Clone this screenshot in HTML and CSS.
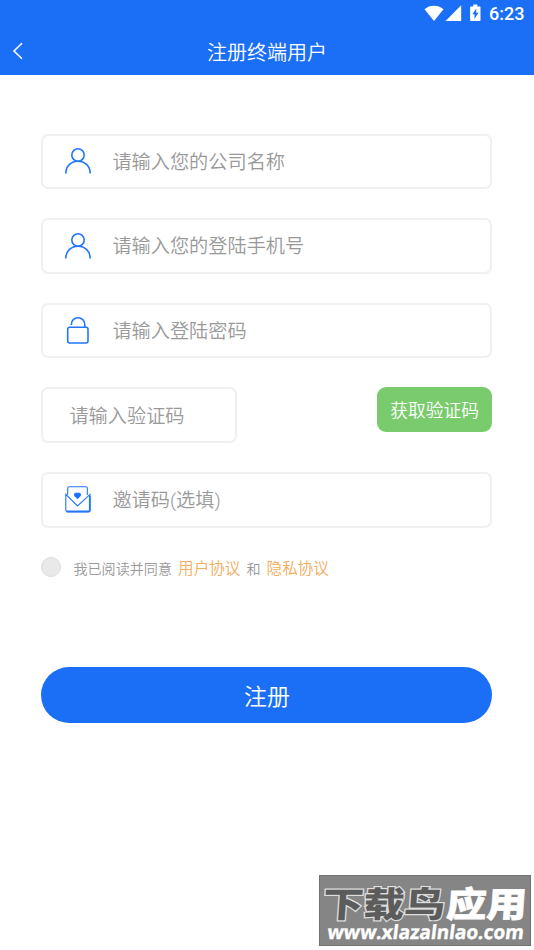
FILE: index.html
```
<!doctype html>
<html lang="zh-CN">
<head>
	<meta charset="UTF-8">
	<title>注册终端用户</title>
	<meta name="viewport" content="width=device-width, initial-scale=1.0">
	<link rel="stylesheet" href="styles.css">
</head>
<body>
	<div class="header">
		<div class="status">
			<svg class="signal" width="74" height="20" viewBox="0 0 74 20">
				<path d="M.5 7.2C6 2.7 14 2.7 19.5 7.2L10 19z"/>
				<path d="M37.2 3.2V19H21.5z"/>
				<path fill-rule="evenodd" d="M46.8 4.5h2.5V2.5h4v2h2.5q.7 0 .7.7v13q0 .8-.8.8h-8.8q-.8 0-.8-.8v-13q0-.7.7-.7zM52.3 6.5l-4 5.7h2.2v4.6l4-6h-2.3z"/>
			</svg>
			<span>6:23</span>
		</div>
		<div class="nav">
			<a class="back" href="javascript:;">
				<svg width="12" height="18" viewBox="0 0 12 18"><path d="M10 1.2L2 9l8 7.8"/></svg>
			</a>
			<h1>注册终端用户</h1>
		</div>
	</div>

	<form class="form">
		<label class="field">
			<svg class="icon" viewBox="0 0 28 30"><circle cx="14" cy="8" r="6.2"/><path d="M1.8 26.6C1.8 18.5 7.5 14.2 14 14.2S26.2 18.5 26.2 26.6"/></svg>
			<input type="text" placeholder="请输入您的公司名称">
		</label>
		<label class="field">
			<svg class="icon" viewBox="0 0 28 30"><circle cx="14" cy="8" r="6.2"/><path d="M1.8 26.6C1.8 18.5 7.5 14.2 14 14.2S26.2 18.5 26.2 26.6"/></svg>
			<input type="text" placeholder="请输入您的登陆手机号">
		</label>
		<label class="field">
			<svg class="icon lock" viewBox="0 0 28 30"><rect x="3.7" y="11.3" width="20.3" height="15.7" rx="2"/><path d="M7.4 9V8.2C7.4 4.4 10.2 1.8 14 1.8s6.8 2.8 6.8 6.6v2.9"/></svg>
			<input type="password" placeholder="请输入登陆密码">
		</label>
		<div class="row">
			<label class="field code">
				<input type="text" placeholder="请输入验证码">
			</label>
			<button type="button" class="get-code">获取验证码</button>
		</div>
		<label class="field">
			<svg class="icon mail" viewBox="0 0 28 30">
				<path d="M3.7 10V3.2q0-1.4 1.4-1.4h16.8q1.4 0 1.4 1.4V10"/>
				<path d="M1.8 9.4V25q0 1.6 1.6 1.6h21q1.6 0 1.6-1.6V9.4L13.5 21z"/>
				<path class="edge" d="M2.5 26.5h22.3q1 0 1-1V11"/>
				<path class="heart" d="M13.5 13.4L10.9 10.8C9.6 9 12 7 13.5 8.7C15 7 17.4 9 16.1 10.8z"/>
			</svg>
			<input type="text" placeholder="邀请码(选填)">
		</label>
		<div class="agree">
			<i class="check"></i>
			<span>我已阅读并同意</span>
			<a href="javascript:;">用户协议</a>
			<span>和</span>
			<a href="javascript:;">隐私协议</a>
		</div>
		<button type="button" class="submit">注册</button>
	</form>

	<svg class="watermark" width="212" height="71" viewBox="0 0 212 71">
		<text class="wm-name wm-dark" transform="translate(0 42) skewX(-4)" textLength="126" lengthAdjust="spacingAndGlyphs">下载鸟</text>
		<text class="wm-name" transform="translate(127 42) skewX(-4)" textLength="83" lengthAdjust="spacingAndGlyphs">应用</text>
		<text class="wm-url" transform="translate(5 65) skewX(-7)" textLength="202" lengthAdjust="spacingAndGlyphs">www.xlazalnlao.com</text>
	</svg>
</body>
</html>
```
FILE: styles.css
```
body,h1{
	margin:0;
	padding:0;
}
*{
	box-sizing:border-box;
}
body{
	background:#fff;
	font-family:Roboto,"Noto Sans CJK SC",sans-serif;
}
a{
	text-decoration:none;
}
input,button{
	margin:0;
	padding:0;
	border:0;
	outline:none;
	background:none;
	font-family:inherit;
	font-weight:350;
}
.header{
	height:75px;
	background:#1b6ff6;
	color:#fff;
}
.status{
	display:flex;
	justify-content:flex-end;
	height:28px;
	padding-right:9px;
	font-size:18px;
	font-weight:500;
	line-height:28px;
}
.signal{
	margin:2px -9px 0 0;
	fill:#fff;
}
.status span{
	width:36px;
	white-space:nowrap;
}
.nav{
	display:grid;
	grid-template-columns:60px 1fr 60px;
	align-items:center;
	height:47px;
}
.back{
	display:flex;
	padding-left:12px;
}
.back svg{
	margin-top:-1px;
	fill:none;
	stroke:#fff;
	stroke-width:1.6;
}
.nav h1{
	padding-top:3px;
	font-size:20px;
	font-weight:350;
	line-height:44px;
	text-align:center;
}
.form{
	padding:58.6px 41.6px 0 41.4px;
}
.field{
	display:flex;
	align-items:center;
	height:55.6px;
	margin-bottom:29px;
	padding-left:20.4px;
	border:2px solid #f0f0f0;
	border-radius:7px;
}
.icon{
	flex:none;
	width:28px;
	height:30px;
	margin:2px 20.6px 0 0;
	fill:none;
	stroke:#2276fb;
	stroke-width:1.6;
}
.lock{
	margin-top:0;
}
.mail{
	margin-top:1px;
	stroke-width:1.1;
}
.mail .edge{
	stroke-width:1.8;
}
.mail .heart{
	fill:#1b6ff6;
}
.field input{
	flex:1;
	min-width:0;
	height:50px;
	padding-top:2px;
	font-size:19.2px;
}
.field input::placeholder{
	color:#999;
}
.row{
	display:flex;
	justify-content:space-between;
	align-items:flex-start;
}
.code{
	width:195.5px;
	padding-left:26px;
}
.get-code{
	width:115.5px;
	height:44.5px;
	padding-bottom:1px;
	border-radius:9px;
	background:#7acb6d;
	color:#fff;
	font-size:17.8px;
}
.agree{
	display:flex;
	align-items:center;
	height:24px;
	color:#999;
	font-size:14.1px;
	font-weight:350;
	line-height:24px;
}
.agree a{
	margin:0 6px;
	color:#f2ad60;
	font-size:15.6px;
}
.check{
	width:20px;
	height:20px;
	margin:-4px 12px 0 0;
	border:1px solid #ddd;
	border-radius:50%;
	background:#e9e9e9;
}
.submit{
	display:block;
	width:100%;
	height:56px;
	margin-top:86px;
	border-radius:28px;
	background:#1b6ff6;
	color:#fff;
	font-size:23px;
}
.watermark{
	position:fixed;
	right:3px;
	bottom:4px;
	border:1px solid #707070;
	background:#858585;
}
.wm-name{
	fill:#fff;
	stroke:#fff;
	stroke-width:.6;
	font-family:"Noto Sans CJK SC",sans-serif;
	font-size:36px;
	font-weight:900;
}
.wm-dark{
	fill:#5c5c5c;
	stroke:#ddd;
	stroke-width:2.5;
	paint-order:stroke;
}
.wm-url{
	fill:#fff;
	font-family:"Open Sans",sans-serif;
	font-size:20px;
	font-weight:700;
	stroke:#fff;
	stroke-width:.4;
}
```
